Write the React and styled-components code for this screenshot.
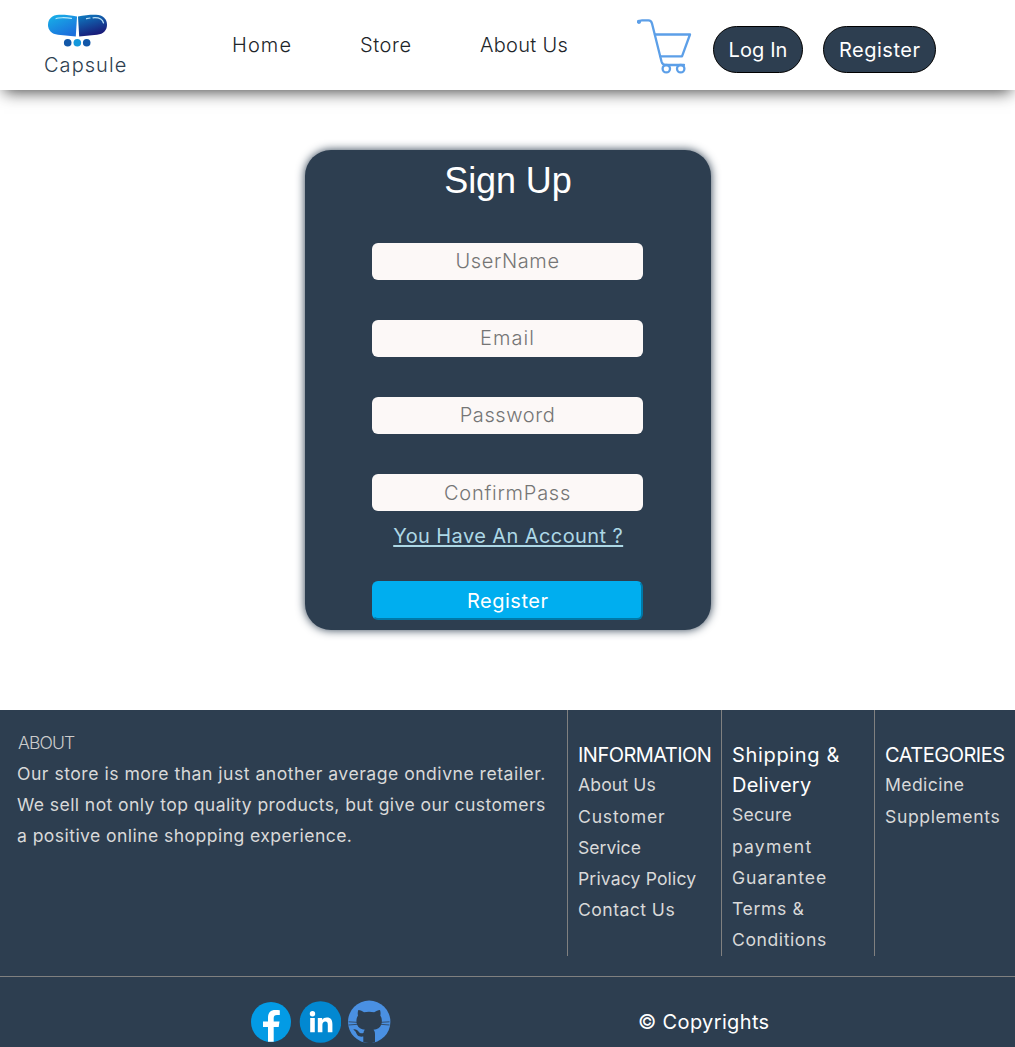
import React from "react";
import styled, { createGlobalStyle } from "styled-components";

const GlobalStyle = createGlobalStyle`
  *, *::before, *::after { box-sizing: border-box; margin: 0; padding: 0; }
  body {
    background: #fff;
    font-family: Inter, "Liberation Sans", sans-serif;
    font-size: 20px;
    line-height: 30px;
    overflow: hidden;
  }
  a { text-decoration: none; color: inherit; }
  ul { list-style: none; }
  svg { display: block; }
`;

const navy = "#2d3e50";

const Page = styled.div`
  display: flex;
  flex-direction: column;
  height: 1047px;
  overflow: hidden;
`;

const Tracked = styled.span`
  letter-spacing: ${(p) => p.$ls || 0}px;
  margin-right: ${(p) => -(p.$ls || 0)}px;
  white-space: nowrap;
`;

const Header = styled.header`
  display: flex;
  height: 90px;
  flex: none;
  background: #fff;
  box-shadow: 0 6px 15px -4px rgba(0, 0, 0, 0.72);
`;

const Brand = styled.a`
  display: flex;
  flex-direction: column;
  width: 188px;
  padding: 12px 0 0 44px;
  color: ${navy};
  font-weight: 350;
  svg { margin: 0 0 2px 2px; }
`;

const Nav = styled.nav`
  display: flex;
  width: 449px;
  padding: 30px 0 0 44px;
  color: #212529;
  font-weight: 350;
`;

const NavLink = styled.a`
  width: ${(p) => p.$w}px;
`;

const CartLink = styled.a`
  width: 76px;
  padding-top: 18px;
`;

const Actions = styled.div`
  display: flex;
  gap: 20px;
  padding-top: 26px;
`;

const PillButton = styled.button`
  width: ${(p) => p.$w}px;
  height: 47px;
  border: 1px solid #000;
  border-radius: 24px;
  background: ${navy};
  color: #fff;
  font: 400 20px/30px Inter, "Liberation Sans", sans-serif;
  text-align: center;
`;

const Main = styled.main`
  display: flex;
  justify-content: center;
  padding: 60px 0 80px 1px;
`;

const Card = styled.form`
  display: flex;
  flex-direction: column;
  align-items: center;
  width: 406px;
  height: 480px;
  border-radius: 26px;
  background: ${navy};
  box-shadow: 0 0 10px ${navy};
`;

const Title = styled.h1`
  margin: 4px 0 35px;
  color: #fff;
  font: 400 36px/54px "Liberation Sans", Arial, sans-serif;
  letter-spacing: -0.1px;
`;

const Fields = styled.div`
  display: flex;
  flex-direction: column;
  gap: 40px;
  padding-right: 1px;
`;

const Input = styled.input`
  width: 271px;
  height: 37px;
  padding-bottom: ${(p) => p.$lift || 0}px;
  border: 0;
  border-radius: 6px;
  background: #fcf8f7;
  font: 350 20px/30px Inter, "Liberation Sans", sans-serif;
  letter-spacing: ${(p) => p.$ls}px;
  text-align: center;
  &::placeholder { color: #757575; opacity: 1; }
`;

const AccountLink = styled.a`
  margin: 10px 0 30px;
  color: lightblue;
  text-decoration: underline;
  text-decoration-thickness: 2px;
  text-underline-offset: 2px;
  text-decoration-skip-ink: none;
`;

const Submit = styled.button`
  width: 271px;
  height: 39px;
  margin-right: 1px;
  border: 2px solid;
  border-color: #00aeef #0079a8 #0079a8 #00aeef;
  border-radius: 6px;
  background: #00aeef;
  color: #fff;
  font: 400 20px/30px Inter, "Liberation Sans", sans-serif;
`;

const Footer = styled.footer`
  flex: 1;
  background: ${navy};
  color: #d9d9d9;
`;

const Columns = styled.div`
  display: grid;
  grid-template-columns: 567px 154px 153px 141px;
  height: 246px;
`;

const About = styled.section`
  padding: 17px 0 0 17px;
  font-size: 17.6px;
  line-height: 31.1px;
`;

const AboutTitle = styled.h2`
  padding-left: 1px;
  color: #ccc;
  font-size: 17.6px;
  font-weight: 350;
  line-height: 31.1px;
`;

const Line = styled.p`
  letter-spacing: ${(p) => p.$ls}px;
  white-space: nowrap;
`;

const Column = styled.section`
  padding: 30px 0 0 10px;
  border-left: 1px solid #808080;
`;

const ColumnTitle = styled.h3`
  color: #fff;
  font-size: 20px;
  font-weight: 400;
  line-height: 30px;
`;

const ColumnList = styled.ul`
  margin-top: -0.6px;
  font-size: 17.6px;
  line-height: 31.2px;
`;

const Row = styled.li`
  letter-spacing: ${(p) => p.$ls}px;
  white-space: nowrap;
`;

const Bottom = styled.div`
  display: flex;
  align-items: flex-start;
  height: 71px;
  margin-top: 20px;
  border-top: 1px solid #808080;
`;

const Socials = styled.div`
  display: flex;
  width: 638px;
  padding: 23px 0 0 250px;
  gap: 7px;
`;

const Copyright = styled.p`
  padding-top: 30px;
  color: #fff;
`;

function T({ s: [text, ls] }) {
  return <Tracked $ls={ls}>{text}</Tracked>;
}

function CapsuleLogo() {
  return (
    <svg width="62" height="36" viewBox="46 12 62 36">
      <defs>
        <linearGradient id="capL" x1="0" y1="0" x2="0.6" y2="1">
          <stop offset="0" stopColor="#17b4e8" />
          <stop offset="1" stopColor="#1b6fdc" />
        </linearGradient>
        <linearGradient id="capR" x1="0" y1="0" x2="0.4" y2="1">
          <stop offset="0" stopColor="#0d7fc4" />
          <stop offset="1" stopColor="#191a78" />
        </linearGradient>
      </defs>
      <path d="M77 16.4 L75.8 36.6 L58 34.8 C51.5 34 48 30 48 25 C48 19 52 15 59 14.8 C65 14.7 71 15.2 77 16.4Z" fill="url(#capL)" />
      <path d="M78 16.4 L79.2 36.6 L97 34.8 C103.5 34 107 30 107 25 C107 19 103 15 96 14.8 C90 14.7 84 15.2 78 16.4Z" fill="url(#capR)" />
      <path d="M56 18.6 C58 17.4 66 17.4 71.5 18.4" fill="none" stroke="#b9ebfa" strokeWidth="1.1" strokeLinecap="round" />
      <path d="M86.5 18.6 L90 18 M93 17.8 C98 17.4 102.5 19 103.5 23" fill="none" stroke="#b9dff5" strokeWidth="1.2" strokeLinecap="round" />
      <circle cx="67.7" cy="42.7" r="3.8" fill="#1257a8" />
      <circle cx="77.3" cy="42.7" r="3.8" fill="#1598dc" />
      <circle cx="86.7" cy="42.7" r="3.8" fill="#1257a8" />
    </svg>
  );
}

function CartIcon() {
  return (
    <svg width="56" height="56" viewBox="637 18 56 56" fill="none" stroke="#5c9fe8" strokeWidth="2.3" strokeLinejoin="round" strokeLinecap="round">
      <path d="M638.5 22 C639.5 20.5 640.5 20.3 642 20.3 H648.5 C650.5 20.3 651.5 21.5 652 23.5 L661.5 61.5 C662.2 64 663.5 65 665.5 65 H684" />
      <path d="M655 34.5 H690 L682 56.3 H660.3" />
      <circle cx="666.3" cy="68.7" r="3.7" />
      <circle cx="680.7" cy="68.7" r="3.7" />
      <circle cx="639" cy="21.8" r="1" fill="#5c9fe8" />
    </svg>
  );
}

function FacebookIcon() {
  return (
    <svg width="42" height="45" viewBox="250 1000 42 45">
      <circle cx="271" cy="1022" r="20" fill="#039be5" />
      <path d="M268 1041.7 V1027 H263 V1021.5 H268 V1018 C268 1012.5 270.5 1010 275.5 1010 C277.5 1010 279 1010.1 279.8 1010.3 V1015 H277 C274.5 1015 273.7 1016.2 273.7 1018.3 V1021.5 H279.5 L278.7 1027 H273.7 V1041.7Z" fill="#fff" />
    </svg>
  );
}

function LinkedinIcon() {
  return (
    <svg width="42" height="45" viewBox="299 1000 42 45">
      <circle cx="320.5" cy="1022" r="20.8" fill="#0288d1" />
      <g fill="#fff">
        <circle cx="312.5" cy="1013.7" r="2.7" />
        <path d="M310.2 1018 h4.600 v14.300 h-4.600z M317.800 1018 h4.400 v2 c1-1.600 2.600-2.400 4.700-2.400 c4 0 5.500 2.500 5.500 6.700 v8 h-4.600 v-7.400 c0-2.200-.7-3.300-2.400-3.300 c-1.900 0-3 1.300-3 3.500 v7.200 h-4.600z" />
      </g>
    </svg>
  );
}

function GithubIcon() {
  return (
    <svg width="44" height="45" viewBox="348 1000 44 45">
      <circle cx="369.200" cy="1021.800" r="21.200" fill="#4a90e2" />
      <path fill={navy} d="M358.300 1010 C360.500 1010 362.500 1011.200 364 1012.300 C367 1011.600 371 1011.600 374.200 1012.300 C376 1011 378 1010 380 1010 C380.700 1012 380.700 1014 380.300 1015.600 C382 1018 382.300 1021.500 381.300 1024.500 C380 1028 377.500 1029.300 373.500 1029.700 C375 1031.200 375 1033 375 1035 V1042.200 C371 1043.400 367 1043.400 363.300 1042.300 V1036.500 C358.500 1037.300 357 1035 356 1032.500 C355.500 1031.200 354.500 1030.500 353.300 1029.500 C355.500 1028.800 357.500 1030.200 358.700 1031.800 C359.800 1033.300 361.500 1033.700 363.500 1033 C363.600 1031.500 364.200 1030.400 365 1029.700 C361 1029.300 358.300 1028 357 1024.500 C356 1021.500 356.300 1018 358 1015.600 C357.600 1014 357.600 1012 358.300 1010Z" />
      <path d="M348.500 1021.800 L357 1022.300 M348.500 1025 L357.500 1024.300 M389.500 1021.800 L381 1022.300 M389.500 1025 L380.500 1024.300" stroke={navy} strokeWidth="0.800" />
    </svg>
  );
}

const nav = [
  ["Home", 1.1, 128],
  ["Store", 0.58, 120],
  ["About Us", 0.28, 100],
];

const fields = [
  ["UserName", 0.62, "text", 2],
  ["Email", 1.1, "email", 2],
  ["Password", 0.6, "password", 2],
  ["ConfirmPass", 0.75, "password", 0],
];

const aboutLines = [
  ["Our store is more than just another average ondivne retailer.", 0.5],
  ["We sell not only top quality products, but give our customers", 0.4],
  ["a positive online shopping experience.", 0.42],
];

const columns = [
  {
    title: [["INFORMATION", -0.53]],
    rows: [["About Us", 0.12], ["Customer", 0.8], ["Service", 0], ["Privacy Policy", 0.13], ["Contact Us", 0.45]],
  },
  {
    title: [["Shipping &", 0.67], ["Delivery", 0.25]],
    rows: [["Secure", 0.22], ["payment", 1.15], ["Guarantee", 0.98], ["Terms &", 0.6], ["Conditions", 0.57]],
  },
  {
    title: [["CATEGORIES", -0.5]],
    rows: [["Medicine", 0.4], ["Supplements", 0.6]],
  },
];

export default function App() {
  return (
    <Page>
      <GlobalStyle />
      <Header>
        <Brand href="#">
          <CapsuleLogo />
          <T s={["Capsule", 1.05]} />
        </Brand>
        <Nav>
          {nav.map(([label, ls, w]) => (
            <NavLink key={label} href="#" $w={w}>
              <T s={[label, ls]} />
            </NavLink>
          ))}
        </Nav>
        <CartLink href="#" aria-label="Cart">
          <CartIcon />
        </CartLink>
        <Actions>
          <PillButton $w={90}>
            <T s={["Log In", 0.1]} />
          </PillButton>
          <PillButton $w={113}>
            <T s={["Register", 0.5]} />
          </PillButton>
        </Actions>
      </Header>
      <Main>
        <Card onSubmit={(e) => e.preventDefault()}>
          <Title>Sign Up</Title>
          <Fields>
            {fields.map(([label, ls, type, lift]) => (
              <Input key={label} type={type} placeholder={label} $ls={ls} $lift={lift} />
            ))}
          </Fields>
          <AccountLink href="#">
            <T s={["You Have An Account ?", 0.41]} />
          </AccountLink>
          <Submit>
            <T s={["Register", 0.5]} />
          </Submit>
        </Card>
      </Main>
      <Footer>
        <Columns>
          <About>
            <AboutTitle>
              <T s={["ABOUT", -0.9]} />
            </AboutTitle>
            {aboutLines.map(([text, ls]) => (
              <Line key={text} $ls={ls}>{text}</Line>
            ))}
          </About>
          {columns.map((c) => (
            <Column key={c.title[0][0]}>
              {c.title.map((t) => (
                <ColumnTitle key={t[0]}>
                  <T s={t} />
                </ColumnTitle>
              ))}
              <ColumnList>
                {c.rows.map(([text, ls]) => (
                  <Row key={text} $ls={ls}>{text}</Row>
                ))}
              </ColumnList>
            </Column>
          ))}
        </Columns>
        <Bottom>
          <Socials>
            <FacebookIcon />
            <LinkedinIcon />
            <GithubIcon />
          </Socials>
          <Copyright>
            <T s={["© Copyrights", 0.35]} />
          </Copyright>
        </Bottom>
      </Footer>
    </Page>
  );
}
